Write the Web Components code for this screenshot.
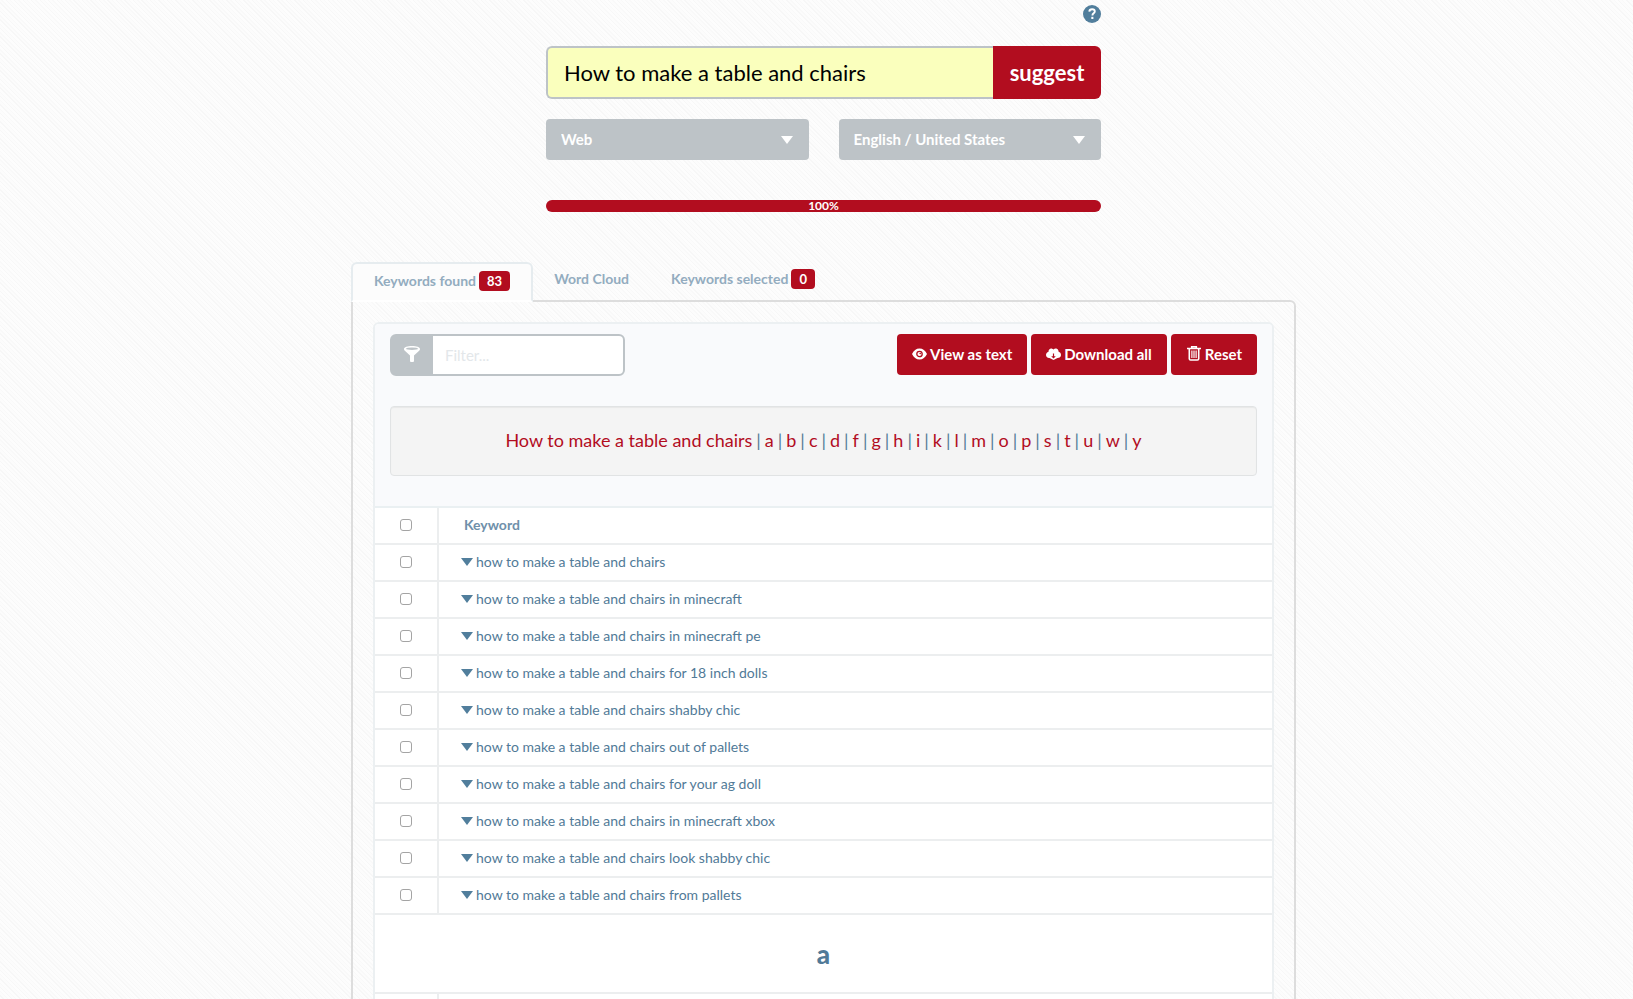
<!DOCTYPE html>
<html lang="en">
<head>
<meta charset="utf-8">
<meta name="viewport" content="width=device-width, initial-scale=1">
<title>Keyword suggestions</title>
<style>
  html {
    height: 100%;
    overflow: hidden;
  }
  body {
    margin: 0;
    height: 100%;
    box-sizing: border-box;
    padding-left: 14px;
    font-family: Lato, "Liberation Sans", sans-serif;
    font-size: 15px;
    color: #517a97;
    background: #fcfcfc repeating-linear-gradient(45deg, #fdfdfd 0 2px, #f7f7f7 2px 3px, #fcfcfc 3px 5px, #f9f9f9 5px 6px);
  }
</style>
</head>
<body>
<suggest-page>
  <search-panel slot="search" query="How to make a table and chairs">
    <select-box slot="options" label="Source" value="Web"></select-box>
    <select-box slot="options" label="Language" value="English / United States"></select-box>
  </search-panel>
  <progress-line slot="search" value="100"></progress-line>
  <keyword-tabs>
    <keyword-toolbar>
      <letter-index term="How to make a table and chairs" letters="abcdfghiklmopstuwy"></letter-index>
    </keyword-toolbar>
    <keyword-table></keyword-table>
  </keyword-tabs>
</suggest-page>

<script>
class SuggestPage extends HTMLElement {
  constructor() {
    super();
    const shadow = this.attachShadow({ mode: 'open' });

    shadow.innerHTML = `
      <style>
        :host {
          display: block;
          max-width: 1170px;
          margin: 0 auto;
        }
        .search {
          width: 50%;
          box-sizing: border-box;
          padding: 5px 15px 0;
          margin: 0 auto 50px;
        }
        .results {
          box-sizing: border-box;
          width: calc(100% * 10 / 12);
          padding: 0 15px;
          margin: 0 auto;
        }
      </style>
      <div class="search"><slot name="search"></slot></div>
      <div class="results"><slot></slot></div>
    `;
  }
}

class SearchPanel extends HTMLElement {
  constructor() {
    super();
    const shadow = this.attachShadow({ mode: 'open' });

    shadow.innerHTML = `
      <style>
        :host {
          display: block;
        }
        .help {
          display: flex;
          justify-content: flex-end;
          margin-bottom: 23px;
        }
        .help a {
          display: block;
          width: 18px;
          height: 18px;
        }
        .help svg {
          display: block;
        }
        form {
          display: flex;
          height: 53px;
          margin-bottom: 20px;
        }
        input {
          flex: 1;
          min-width: 0;
          box-sizing: border-box;
          padding: 0 16px;
          border: 2px solid #bdc3c7;
          border-right: 0;
          border-radius: 6px 0 0 6px;
          background: #faffbd;
          color: #000;
          font: 22px Lato, sans-serif;
        }
        button {
          width: 108px;
          border: 0;
          padding: 0;
          border-radius: 0 6px 6px 0;
          background: #b20d1f;
          color: #fff;
          font: bold 22px Lato, sans-serif;
        }
        .options {
          display: grid;
          grid-template-columns: 1fr 1fr;
          gap: 30px;
        }
      </style>
      <div class="help">
        <a href="#help" aria-label="Help">
          <svg width="18" height="18" viewBox="0 0 18 18">
            <circle cx="9" cy="9" r="9" fill="#517e9c"/>
            <path d="M6.3 6.6C6.4 4.9 7.5 4.2 9.1 4.2c1.6 0 2.7.8 2.7 2.2 0 1.9-2.4 1.9-2.4 4" fill="none" stroke="#fff" stroke-width="1.9"/>
            <rect x="8.3" y="11.8" width="2.1" height="2.2" fill="#fff"/>
          </svg>
        </a>
      </div>
      <form>
        <input type="text" aria-label="Search term" value="${this.getAttribute('query')}">
        <button type="button">suggest</button>
      </form>
      <div class="options"><slot name="options"></slot></div>
    `;
  }
}

class SelectBox extends HTMLElement {
  constructor() {
    super();
    const shadow = this.attachShadow({ mode: 'open' });

    shadow.innerHTML = `
      <style>
        :host {
          display: grid;
          align-items: center;
        }
        select, svg {
          grid-area: 1 / 1;
        }
        select {
          appearance: none;
          width: 100%;
          height: 41px;
          padding: 0 40px 2px 15px;
          border: 0;
          border-radius: 4px;
          background: #bdc3c7;
          color: #fff;
          font: bold 15px Lato, sans-serif;
        }
        svg {
          justify-self: end;
          margin-right: 16px;
          pointer-events: none;
        }
      </style>
      <select aria-label="${this.getAttribute('label')}">
        <option>${this.getAttribute('value')}</option>
      </select>
      <svg width="12" height="8" viewBox="0 0 12 8"><path d="M0 0h12L6 8z" fill="#fff"/></svg>
    `;
  }
}

class ProgressLine extends HTMLElement {
  constructor() {
    super();
    const shadow = this.attachShadow({ mode: 'open' });
    const value = this.getAttribute('value');

    shadow.innerHTML = `
      <style>
        :host {
          display: block;
          margin-top: 40px;
          border-radius: 6px;
          background: #ebedef;
        }
        div {
          width: ${value}%;
          height: 12px;
          border-radius: 6px;
          background: #b20d1f;
          color: #fff;
          font-size: 12px;
          font-weight: bold;
          line-height: 12px;
          text-align: center;
        }
      </style>
      <div role="progressbar" aria-valuenow="${value}" aria-valuemin="0" aria-valuemax="100">${value}%</div>
    `;
  }
}

class KeywordTabs extends HTMLElement {
  constructor() {
    super();
    const shadow = this.attachShadow({ mode: 'open' });

    shadow.innerHTML = `
      <style>
        :host {
          display: block;
        }
        nav {
          display: flex;
          align-items: flex-start;
        }
        a {
          display: flex;
          align-items: center;
          gap: 3px;
          box-sizing: border-box;
          height: 38px;
          padding: 0 21px 4px;
          color: #93acbf;
          font-size: 14px;
          font-weight: bold;
          line-height: 18px;
          text-decoration: none;
        }
        /* the open tab covers the panel's top line */
        a.active {
          position: relative;
          height: 40px;
          margin-bottom: -2px;
          padding-bottom: 2px;
          border: 2px solid #e6ecef;
          border-bottom-color: #fff;
          border-radius: 6px 6px 0 0;
          background: #fcfcfc;
        }
        .badge {
          padding: 0 8px;
          border-radius: 4px;
          background: #b20d1f;
          color: #fff;
          font-size: 13px;
          line-height: 20px;
        }
        .panel {
          padding: 20px;
          border: 2px solid #ddd;
          border-radius: 0 6px 6px 6px;
        }
        .box {
          border: 2px solid #ecf0f2;
          border-radius: 6px;
          background: #fff;
          overflow: hidden;
        }
      </style>
      <nav>
        <a class="active" href="#found">Keywords found <span class="badge">83</span></a>
        <a href="#cloud">Word Cloud</a>
        <a href="#selected">Keywords selected <span class="badge">0</span></a>
      </nav>
      <div class="panel">
        <div class="box"><slot></slot></div>
      </div>
    `;
  }
}

class KeywordToolbar extends HTMLElement {
  constructor() {
    super();
    const shadow = this.attachShadow({ mode: 'open' });

    shadow.innerHTML = `
      <style>
        :host {
          display: block;
          padding: 10px 15px 30px;
          background: #f9fafc;
          border-bottom: 2px solid #eaf0f2;
        }
        .bar {
          display: flex;
          justify-content: space-between;
          margin-bottom: 30px;
        }
        .filter {
          display: flex;
          box-sizing: border-box;
          width: 235px;
          height: 42px;
          border: 2px solid #bdc3c7;
          border-radius: 6px;
          background: #bdc3c7;
        }
        .filter label {
          display: grid;
          place-items: center;
          box-sizing: border-box;
          width: 41px;
          padding: 0 2px 2px 0;
        }
        .filter input {
          flex: 1;
          min-width: 0;
          padding: 0 12px;
          border: 0;
          border-radius: 0 4px 4px 0;
          background: #fff;
          font: 15px Lato, sans-serif;
        }
        .filter input::placeholder {
          color: #e3e7ea;
        }
        .buttons {
          display: flex;
          gap: 4px;
        }
        button {
          display: flex;
          align-items: center;
          gap: 3px;
          height: 41px;
          padding: 0 15px 2px;
          border: 0;
          border-radius: 4px;
          background: #b20d1f;
          color: #fff;
          font: bold 15px Lato, sans-serif;
        }
      </style>
      <div class="bar">
        <div class="filter">
          <label for="filter" aria-label="Filter">
            <svg width="16" height="16" viewBox="0 0 16 16">
              <path d="M0 3C0 1.200 3.500 0 8 0s8 1.200 8 3c0 1-.6 1.500-1.400 2.300L10 9.500V15q0 1-1 1H7q-1 0-1-1V9.500L1.400 5.300C.6 4.500 0 4 0 3z" fill="#fff"/>
              <ellipse cx="8" cy="2.700" rx="6" ry="1.300" fill="#bdc3c7"/>
            </svg>
          </label>
          <input id="filter" type="text" placeholder="Filter...">
        </div>
        <div class="buttons">
          <button type="button">
            <svg width="15" height="12" viewBox="0 0 15 12">
              <path d="M0 6C1.500 2.500 4.300.5 7.500.5S13.500 2.500 15 6c-1.500 3.500-4.300 5.500-7.500 5.500S1.500 9.500 0 6z" fill="#fff"/>
              <circle cx="7.500" cy="6" r="2.700" fill="none" stroke="#b20d1f" stroke-width="1.300"/>
              <circle cx="8.200" cy="5.500" r=".8" fill="#b20d1f"/>
            </svg>
            View as text
          </button>
          <button type="button">
            <svg width="15" height="12" viewBox="0 0 15 12">
              <path d="M3.500 10A3 3 0 0 1 0 7c0-1.600 1-2.700 2.400-3C2.500 1.500 4 .3 5.600.6 6.500.8 7 1.200 7.500 1.600 8.300.6 9.300.2 10.300.5c1.600.4 2.300 1.700 2.300 3.300C14 4.200 15 5.300 15 7c0 1.800-1.500 3-3.500 3L7.500 12z" fill="#fff"/>
              <path d="M6.900 5.500h1.200v2.700H9.800L7.500 10.600 5.200 8.200h1.700z" fill="#b20d1f"/>
            </svg>
            Download all
          </button>
          <button type="button">
            <svg width="16" height="15" viewBox="-1 0 16 15">
              <path d="M0 2.500h14M4.700 2V.8h4.600V2M2.300 3v9.700q0 1.300 1.300 1.300h6.800q1.300 0 1.300-1.300V3" fill="none" stroke="#fff" stroke-width="1.600"/>
              <path d="M4.900 4.500v7.500M7 4.500v7.500M9.100 4.500v7.500" stroke="#fff" stroke-width="1.200"/>
            </svg>
            Reset
          </button>
        </div>
      </div>
      <slot></slot>
    `;
  }
}

class LetterIndex extends HTMLElement {
  constructor() {
    super();
    const shadow = this.attachShadow({ mode: 'open' });
    const entries = [this.getAttribute('term'), ...this.getAttribute('letters')];

    shadow.innerHTML = `
      <style>
        :host {
          display: flex;
          flex-wrap: wrap;
          justify-content: center;
          gap: 4px;
          padding: 21px 20px 23px;
          border: 1px solid #e1e3e4;
          border-radius: 4px;
          background: #f4f4f4;
          box-shadow: inset 0 1px 1px rgba(0,0,0,0.05);
          font-size: 18px;
          line-height: 24px;
        }
        a {
          color: #b20d1f;
          text-decoration: none;
        }
      </style>
      ${entries.map((entry) => `<a href="#${entry}">${entry}</a>`).join('<span>|</span>')}
    `;
  }
}

class KeywordTable extends HTMLElement {
  constructor() {
    super();
    const shadow = this.attachShadow({ mode: 'open' });
    const keywords = [
      'how to make a table and chairs',
      'how to make a table and chairs in minecraft',
      'how to make a table and chairs in minecraft pe',
      'how to make a table and chairs for 18 inch dolls',
      'how to make a table and chairs shabby chic',
      'how to make a table and chairs out of pallets',
      'how to make a table and chairs for your ag doll',
      'how to make a table and chairs in minecraft xbox',
      'how to make a table and chairs look shabby chic',
      'how to make a table and chairs from pallets'
    ];

    shadow.innerHTML = `
      <style>
        :host {
          display: block;
        }
        table {
          width: 100%;
          border-spacing: 0;
          table-layout: fixed;
        }
        .check {
          width: 64px;
        }
        th, td {
          box-sizing: border-box;
          height: 37px;
          padding: 0 0 2px;
          border-bottom: 2px solid #eceeef;
          text-align: left;
          font-size: 14px;
          line-height: 20px;
        }
        th:first-child, td:first-child:not(.letter) {
          border-right: 2px solid #eceeef;
          text-align: center;
        }
        th + th {
          padding-left: 25px;
          color: #6f90aa;
        }
        td + td {
          padding-left: 22px;
        }
        input {
          appearance: none;
          display: block;
          box-sizing: border-box;
          width: 12px;
          height: 12px;
          margin: 0 auto;
          border: 1px solid #a4a4a4;
          border-radius: 3px;
          background: #fff;
        }
        a {
          display: flex;
          align-items: center;
          gap: 3px;
          color: #517a97;
          text-decoration: none;
        }
        td.letter {
          height: 79px;
          padding: 0;
          font-size: 26px;
          font-weight: 900;
          text-align: center;
        }
      </style>
      <table>
        <colgroup><col class="check"><col></colgroup>
        <thead>
          <tr>
            <th><input type="checkbox" aria-label="Select all"></th>
            <th>Keyword</th>
          </tr>
        </thead>
        <tbody>
          ${keywords.map((keyword) => this.row(keyword)).join('')}
          <tr><td class="letter" colspan="2">a</td></tr>
          <tr><td></td><td></td></tr>
        </tbody>
      </table>
    `;
  }

  row(keyword) {
    return `
      <tr>
        <td><input type="checkbox" aria-label="${keyword}"></td>
        <td>
          <a href="#">
            <svg width="12" height="8" viewBox="0 0 12 8"><path d="M0 0h12L6 8z" fill="#517e9c"/></svg>
            ${keyword}
          </a>
        </td>
      </tr>
    `;
  }
}

customElements.define('suggest-page', SuggestPage);
customElements.define('search-panel', SearchPanel);
customElements.define('select-box', SelectBox);
customElements.define('progress-line', ProgressLine);
customElements.define('keyword-tabs', KeywordTabs);
customElements.define('keyword-toolbar', KeywordToolbar);
customElements.define('letter-index', LetterIndex);
customElements.define('keyword-table', KeywordTable);
</script>
</body>
</html>
